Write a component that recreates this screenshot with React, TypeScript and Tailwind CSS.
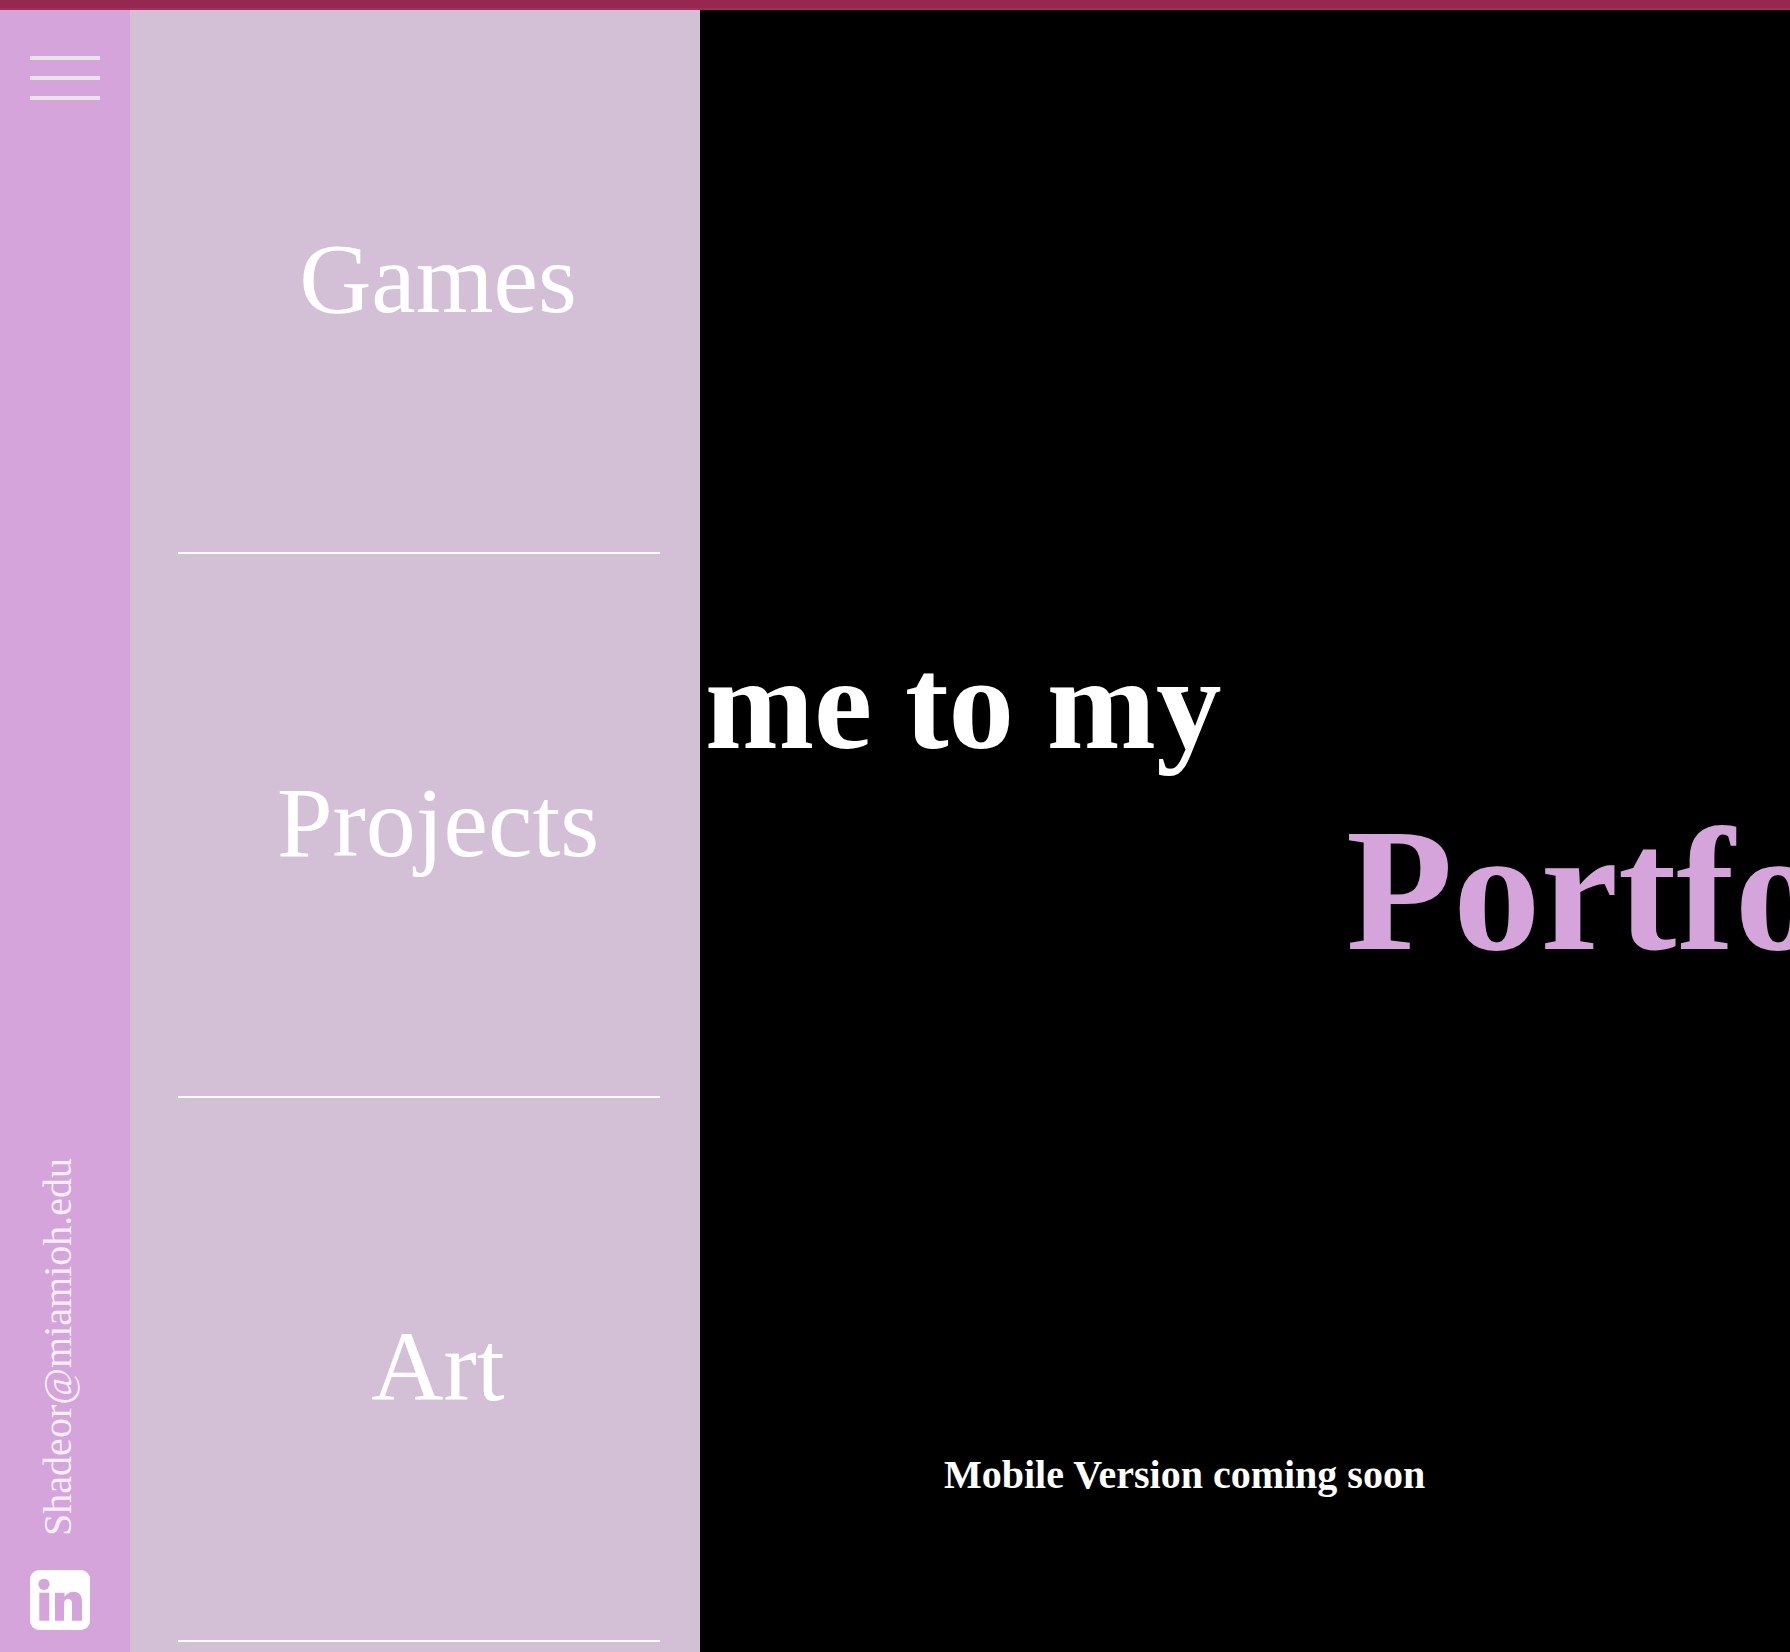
const menuItems = ["Games", "Projects", "Art"];

function LinkedinIcon() {
  return (
    <svg viewBox="0 0 60 60" className="size-[60px]">
      <rect width="60" height="60" rx="9" fill="#fff" />
      <circle cx="14" cy="14.3" r="5.6" fill="#d4a4da" />
      <rect x="9.3" y="22.7" width="10" height="28" fill="#d4a4da" />
      <path
        d="M25 22.7h9.5v4c2-3 5.5-5 9-5 6 0 8.5 4 8.5 10v19h-10V34c0-3-1-5-4-5s-4 2.5-4 5v16.7H25Z"
        fill="#d4a4da"
      />
    </svg>
  );
}

export default function App() {
  return (
    <div className="relative flex h-[1652px] w-[1790px] flex-col overflow-hidden bg-black font-['Liberation_Serif',serif] text-white">
      <div className="h-2.5 shrink-0 border-b-2 border-[#a12f5c] bg-[#952751]" />

      <div className="relative flex-1">
        {/* page content sits under the open menu */}
        <main className="flex h-full flex-col">
          <h1 className="mt-[628px] pl-[363px] text-[131px] leading-none font-bold whitespace-nowrap">Welcome to my</h1>
          <h2 className="mt-[34px] pl-[1346px] text-[175px] leading-none font-bold whitespace-nowrap text-[#d4a4da]">Portfolio</h2>
          <p className="mt-[477px] pl-[944px] text-[40px] leading-none font-bold whitespace-nowrap">Mobile Version coming soon</p>
        </main>

        <aside className="absolute inset-y-0 left-0 flex">
          <div className="flex w-[130px] flex-col items-start bg-[#d4a4da] pb-[22px] pl-[30px]">
            <div className="mt-[46px] flex w-[70px] flex-col gap-4">
              <div className="h-1 bg-[#e6e6e6]" />
              <div className="h-1 bg-[#e6e6e6]" />
              <div className="h-1 bg-[#e6e6e6]" />
            </div>
            <div className="mt-auto mb-[34px] ml-[8px] rotate-180 text-[40px] leading-none text-[#f7eff8] [writing-mode:vertical-rl]">
              Shadeor@miamioh.edu
            </div>
            <LinkedinIcon />
          </div>
          <nav className="w-[570px] bg-[#d3c0d7] pr-10 pl-12">
            {menuItems.map((item) => (
              <div key={item} className="flex h-[544px] items-center justify-center border-b-2 border-white pb-1 pl-[38px] text-[100px] text-white">
                {item}
              </div>
            ))}
          </nav>
        </aside>
      </div>
    </div>
  );
}
